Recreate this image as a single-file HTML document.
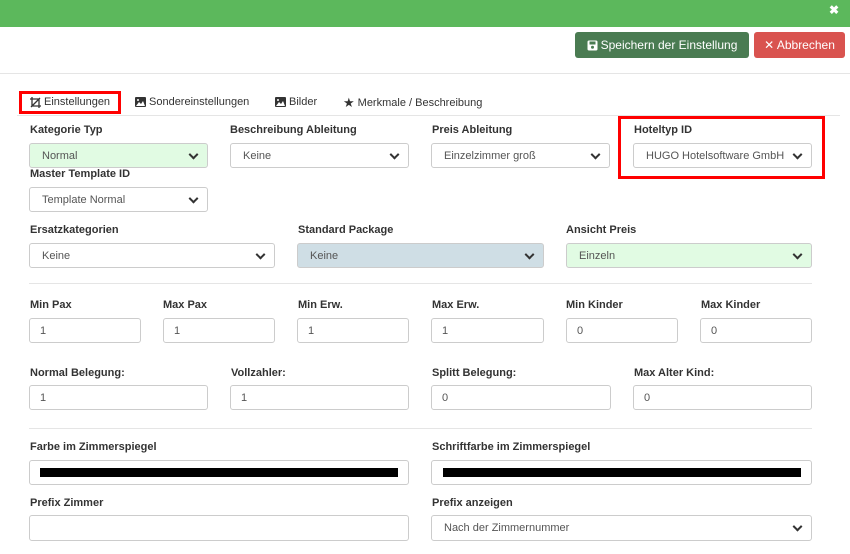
<!DOCTYPE html>
<html><head><meta charset="utf-8"><style>
*{box-sizing:border-box;margin:0;padding:0}
body{width:850px;height:554px;background:#fff;font-family:"Liberation Sans",sans-serif;position:relative;overflow:hidden;color:#333}
.a{position:absolute}
.lbl{position:absolute;font-size:11px;font-weight:bold;color:#333;white-space:nowrap}
.f{position:absolute;border:1px solid #ccc;border-radius:3px;background:#fff;font-size:11px;color:#555;padding-left:12px;display:flex;align-items:center;white-space:nowrap;overflow:hidden}
.f.sel::after{content:"";position:absolute;right:10px;top:50%;width:5px;height:5px;border-right:2px solid #333;border-bottom:2px solid #333;transform:translateY(-70%) rotate(45deg)}
.g{background:#e1fbe3}
.b{background:#cfdee5}
.hr{position:absolute;height:1px;background:#e5e5e5}
.tab{position:absolute;top:96px;font-size:11px;color:#333;display:flex;align-items:center;gap:3px;white-space:nowrap}
</style></head><body>
<div class="a" style="left:0;top:0;width:850px;height:27px;background:#5cb85c"></div>
<div class="a" style="left:829px;top:3px;color:#fff;font-size:12px;font-weight:bold">✖</div>
<div class="a" style="left:575px;top:32px;width:174px;height:26px;background:#4a7b52;border-radius:3px;color:#fff;font-size:12px;display:flex;align-items:center;justify-content:center;gap:3px">
<svg width="11" height="11" viewBox="0 0 11 11"><rect x="0.5" y="0.5" width="10" height="10" rx="1.5" fill="#fff"/><rect x="2.5" y="1.5" width="6" height="3" fill="#4a7b52"/><circle cx="5.5" cy="7.3" r="1.5" fill="#4a7b52"/></svg>Speichern der Einstellung</div>
<div class="a" style="left:754px;top:32px;width:91px;height:26px;background:#d9534f;border-radius:3px;color:#fff;font-size:12px;display:flex;align-items:center;justify-content:center">✕ Abbrechen</div>
<div class="hr" style="left:0;top:73px;width:850px"></div>
<div class="a" style="left:19px;top:91px;width:102px;height:23px;border:3px solid #f00"></div>
<div class="tab" style="left:30px"><svg width="11" height="11" viewBox="0 0 11 11" fill="none" stroke="#333" stroke-width="1.3"><path d="M2 0v9h9M0 2h9v9M1 10L10 1"/></svg>Einstellungen</div>
<div class="tab" style="left:135px"><svg width="11" height="10" viewBox="0 0 11 10"><rect width="11" height="10" rx="1" fill="#333"/><path d="M1 9l3-4 2 2 2-3 2 5z" fill="#fff"/><circle cx="3" cy="3" r="1" fill="#fff"/></svg>Sondereinstellungen</div>
<div class="tab" style="left:275px"><svg width="11" height="10" viewBox="0 0 11 10"><rect width="11" height="10" rx="1" fill="#333"/><path d="M1 9l3-4 2 2 2-3 2 5z" fill="#fff"/><circle cx="3" cy="3" r="1" fill="#fff"/></svg>Bilder</div>
<div class="tab" style="left:343px"><span style="font-size:13px;line-height:1">★</span>Merkmale / Beschreibung</div>
<div class="hr" style="left:17px;top:115px;width:823px"></div>
<div class="a" style="left:618px;top:116px;width:207px;height:63px;border:3px solid #f00"></div>

<div class="lbl" style="left:30px;top:124px">Kategorie Typ</div>
<div class="lbl" style="left:230px;top:124px">Beschreibung Ableitung</div>
<div class="lbl" style="left:432px;top:124px">Preis Ableitung</div>
<div class="lbl" style="left:634px;top:124px">Hoteltyp ID</div>
<div class="f sel g" style="left:29px;top:143px;width:179px;height:25px">Normal</div>
<div class="f sel" style="left:230px;top:143px;width:179px;height:25px">Keine</div>
<div class="f sel" style="left:431px;top:143px;width:179px;height:25px">Einzelzimmer groß</div>
<div class="f sel" style="left:633px;top:143px;width:179px;height:25px">HUGO Hotelsoftware GmbH</div>
<div class="lbl" style="left:30px;top:168px">Master Template ID</div>
<div class="f sel" style="left:29px;top:187px;width:179px;height:25px">Template Normal</div>

<div class="lbl" style="left:30px;top:224px">Ersatzkategorien</div>
<div class="lbl" style="left:298px;top:224px">Standard Package</div>
<div class="lbl" style="left:566px;top:224px">Ansicht Preis</div>
<div class="f sel" style="left:29px;top:243px;width:246px;height:25px">Keine</div>
<div class="f sel b" style="left:297px;top:243px;width:247px;height:25px">Keine</div>
<div class="f sel g" style="left:566px;top:243px;width:246px;height:25px">Einzeln</div>
<div class="hr" style="left:29px;top:283px;width:783px"></div>

<div class="lbl" style="left:30px;top:299px">Min Pax</div>
<div class="lbl" style="left:163px;top:299px">Max Pax</div>
<div class="lbl" style="left:298px;top:299px">Min Erw.</div>
<div class="lbl" style="left:432px;top:299px">Max Erw.</div>
<div class="lbl" style="left:566px;top:299px">Min Kinder</div>
<div class="lbl" style="left:701px;top:299px">Max Kinder</div>
<div class="f" style="left:29px;top:318px;width:112px;height:25px;padding-left:10px">1</div>
<div class="f" style="left:163px;top:318px;width:112px;height:25px;padding-left:10px">1</div>
<div class="f" style="left:297px;top:318px;width:112px;height:25px;padding-left:10px">1</div>
<div class="f" style="left:431px;top:318px;width:113px;height:25px;padding-left:10px">1</div>
<div class="f" style="left:566px;top:318px;width:112px;height:25px;padding-left:10px">0</div>
<div class="f" style="left:700px;top:318px;width:112px;height:25px;padding-left:10px">0</div>

<div class="lbl" style="left:30px;top:367px">Normal Belegung:</div>
<div class="lbl" style="left:231px;top:367px">Vollzahler:</div>
<div class="lbl" style="left:432px;top:367px">Splitt Belegung:</div>
<div class="lbl" style="left:634px;top:367px">Max Alter Kind:</div>
<div class="f" style="left:29px;top:385px;width:179px;height:25px;padding-left:10px">1</div>
<div class="f" style="left:230px;top:385px;width:179px;height:25px;padding-left:10px">1</div>
<div class="f" style="left:431px;top:385px;width:180px;height:25px;padding-left:10px">0</div>
<div class="f" style="left:633px;top:385px;width:179px;height:25px;padding-left:10px">0</div>
<div class="hr" style="left:29px;top:428px;width:783px"></div>

<div class="lbl" style="left:30px;top:441px">Farbe im Zimmerspiegel</div>
<div class="lbl" style="left:432px;top:441px">Schriftfarbe im Zimmerspiegel</div>
<div class="f" style="left:29px;top:460px;width:380px;height:25px"></div>
<div class="a" style="left:40px;top:468px;width:358px;height:9px;background:#000"></div>
<div class="f" style="left:431px;top:460px;width:381px;height:25px"></div>
<div class="a" style="left:443px;top:468px;width:358px;height:9px;background:#000"></div>

<div class="lbl" style="left:30px;top:497px">Prefix Zimmer</div>
<div class="lbl" style="left:432px;top:497px">Prefix anzeigen</div>
<div class="f" style="left:29px;top:515px;width:380px;height:26px"></div>
<div class="f sel" style="left:431px;top:515px;width:381px;height:26px">Nach der Zimmernummer</div>
</body></html>
